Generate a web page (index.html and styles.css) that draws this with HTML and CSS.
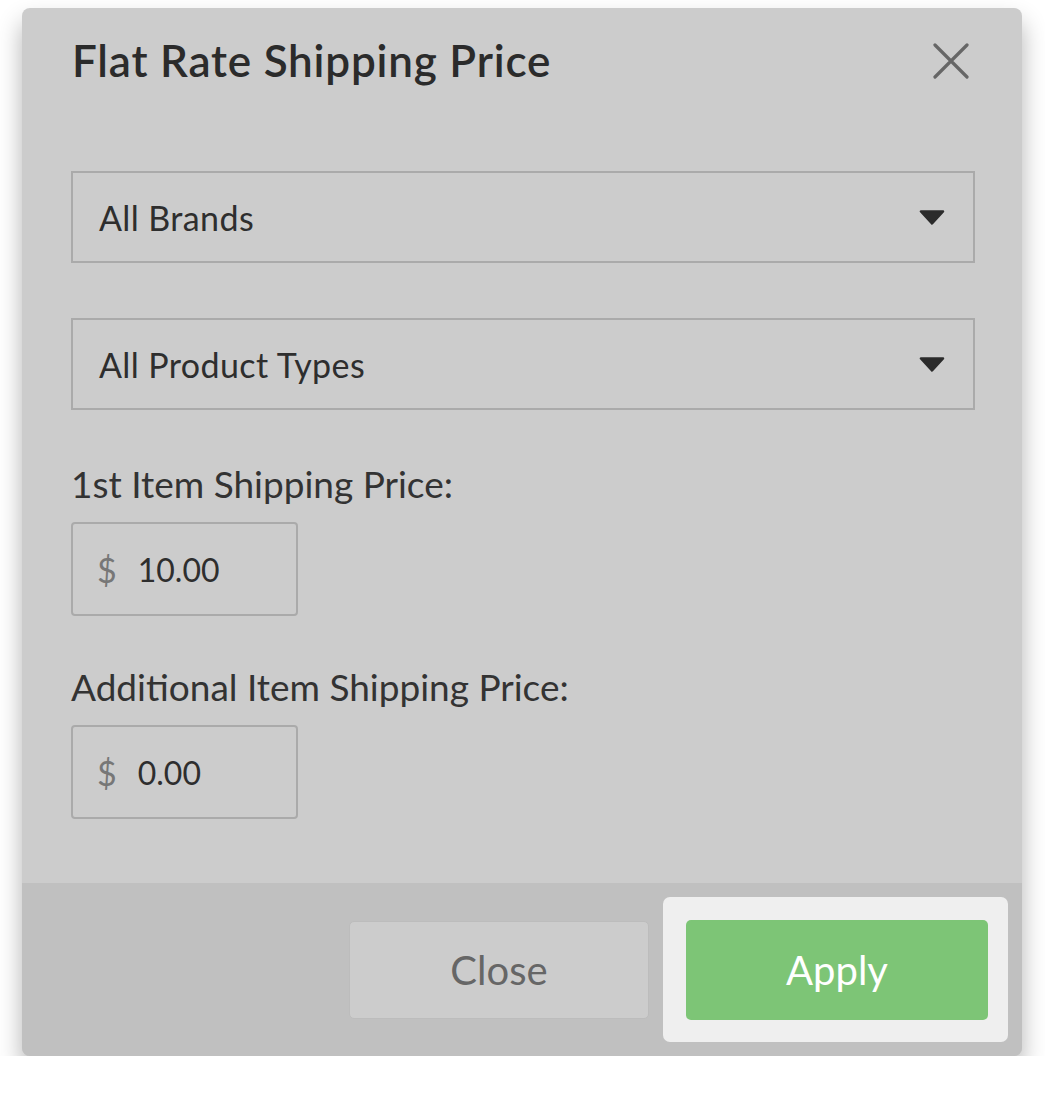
FILE: index.html
```html
<!DOCTYPE html>
<html lang="en">
<head>
<meta charset="UTF-8">
<title>Flat Rate Shipping Price</title>
<meta name="viewport" content="width=device-width,initial-scale=1">
<link rel="stylesheet" href="styles.css">
</head>
<body>

<div class="modal">
  <div class="modal-head">
    <h1>Flat Rate Shipping Price</h1>
    <button class="close-x" aria-label="Close">
      <svg width="36" height="36" viewBox="0 0 36 36"><path d="M2 2L34 34M34 2L2 34" stroke="#666" stroke-width="3.2" stroke-linecap="round" fill="none"/></svg>
    </button>
  </div>

  <div class="modal-body">
    <div class="select">
      <span>All Brands</span>
      <svg class="caret" width="26" height="15" viewBox="0 0 26 15"><path d="M2 1.5H24L13 13.5Z" fill="#2b2b2b" stroke="#2b2b2b" stroke-width="2.5" stroke-linejoin="round"/></svg>
    </div>
    <div class="select">
      <span>All Product Types</span>
      <svg class="caret" width="26" height="15" viewBox="0 0 26 15"><path d="M2 1.5H24L13 13.5Z" fill="#2b2b2b" stroke="#2b2b2b" stroke-width="2.5" stroke-linejoin="round"/></svg>
    </div>

    <label class="field-label">1st Item Shipping Price:</label>
    <div class="price"><span class="cur">$</span><span>10.00</span></div>

    <label class="field-label">Additional Item Shipping Price:</label>
    <div class="price"><span class="cur">$</span><span>0.00</span></div>
  </div>

  <div class="modal-foot">
    <button class="btn btn-close">Close</button>
    <div class="highlight">
      <button class="btn btn-apply">Apply</button>
    </div>
  </div>
</div>

</body>
</html>
```

FILE: styles.css
```css
*{margin:0;padding:0;box-sizing:border-box;font-family:Lato,"Open Sans",Arial,sans-serif}
body{background:#fff;color:#2e2e2e}
.modal{width:1000px;margin:8px 0 0 22px;height:1048px;background:#cccccc;border-radius:8px;box-shadow:0 14px 24px rgba(0,0,0,.3);overflow:hidden;display:flex;flex-direction:column}
.modal-head{display:flex;justify-content:space-between;align-items:flex-start;padding:26px 53px 0 50px}
h1{font-size:44px;font-weight:600;line-height:52px;color:#2b2b2b;letter-spacing:.8px}
.close-x{background:none;border:none;margin-top:9px;cursor:pointer}
.close-x svg{display:block}
.modal-body{flex:1;padding:85px 47px 0 49px}
.select{height:92px;border:2px solid #aaa;display:flex;align-items:center;justify-content:space-between;padding:0 28px 0 26px;font-size:34px;letter-spacing:.4px;color:#2e2e2e;margin-bottom:55px}
.caret{display:block}
.field-label{display:block;font-size:37px;line-height:44px;color:#333;margin:-3px 0 16px 0}
.price{width:227px;height:94px;border:2px solid #aaa;border-radius:4px;display:flex;align-items:center;gap:21px;padding:0 0 0 24px;font-size:32px;color:#2e2e2e;margin-bottom:52px}
.price .cur{color:#777;font-size:34px}
.modal-foot{height:173px;background:#c0c0c0;display:flex;justify-content:flex-end;align-items:center;gap:14px;padding-right:14px}
.btn{border:none;border-radius:5px;font-size:40px;cursor:pointer}
.btn-close{width:300px;height:98px;background:#cccccc;color:#666;border:1px solid #bcbcbc}
.highlight{background:#efefef;border-radius:7px;padding:23px 20px 22px 23px}
.btn-apply{display:block;width:302px;height:100px;background:#7dc576;color:#fff}
```
